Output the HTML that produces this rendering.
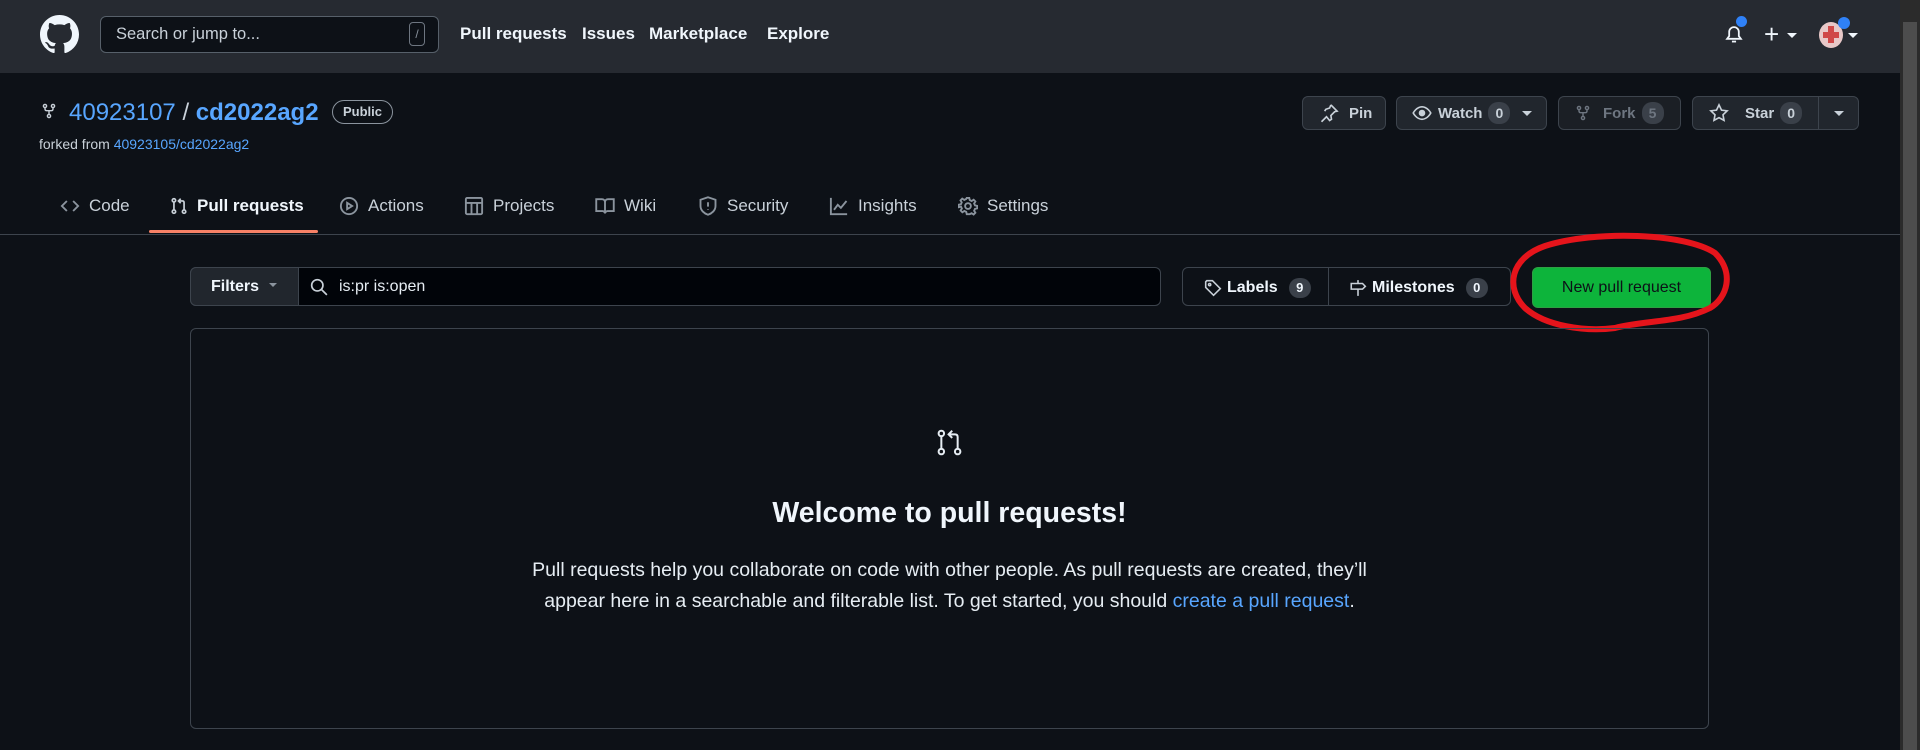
<!DOCTYPE html>
<html><head><meta charset="utf-8"><style>
*{box-sizing:border-box;margin:0;padding:0}
body{width:1920px;height:750px;overflow:hidden;background:#0d1117;font-family:"Liberation Sans",sans-serif;color:#c9d1d9;position:relative}
.a{position:absolute;white-space:nowrap}
.hdr{position:absolute;left:0;top:0;width:1900px;height:73px;background:#262a31}
.sb{position:absolute;right:0;top:0;width:20px;height:750px;background:#2b2b2b}
.sb i{position:absolute;left:3px;top:22px;width:14px;height:728px;background:#4d4d4d}
.nav{font-weight:bold;font-size:17px;color:#f0f6fc;top:24px}
.btn{position:absolute;border:1px solid #3d444d;border-radius:6px;background:#21262d;height:34px;top:96px;font-size:15px;font-weight:bold;color:#c9d1d9;display:flex;align-items:center}
.cnt{display:inline-block;background:#3a4049;border-radius:10px;min-width:22px;height:22px;line-height:22px;text-align:center;font-size:14px;margin-left:6px}
.tab{top:196px;font-size:17px;color:#c9d1d9;display:flex;align-items:center;gap:9px}
.tab svg{stroke:#8b949e;fill:none;stroke-width:1.5}
</style></head><body>
<div class="hdr"></div>
<div class="sb"><i></i></div>
<svg class="a" style="left:40px;top:15px" width="39" height="39" viewBox="0 0 16 16"><path fill="#f0f6fc" d="M8 0C3.58 0 0 3.58 0 8c0 3.540 2.29 6.530 5.470 7.590.4.07.55-.17.55-.38 0-.19-.01-.82-.01-1.49-2.010.37-2.530-.49-2.690-.94-.09-.23-.48-.94-.82-1.130-.28-.15-.68-.52-.01-.53.63-.01 1.080.58 1.230.82.72 1.210 1.870.87 2.330.66.07-.52.28-.87.51-1.070-1.780-.2-3.640-.89-3.640-3.950 0-.87.31-1.590.82-2.150-.08-.2-.36-1.020.08-2.120 0 0 .67-.21 2.200.82.64-.18 1.320-.27 2-.27.68 0 1.360.09 2 .27 1.530-1.040 2.200-.82 2.200-.82.44 1.100.16 1.920.08 2.120.51.56.82 1.270.82 2.150 0 3.070-1.870 3.750-3.650 3.950.29.25.54.73.54 1.480 0 1.070-.01 1.930-.01 2.200 0 .21.15.46.55.38A8.013 8.013 0 0016 8c0-4.420-3.580-8-8-8z"/></svg>
<div class="a" style="left:100px;top:16px;width:339px;height:37px;border:1px solid #57606a;border-radius:6px;background:#0d1117"></div>
<div class="a" style="left:116px;top:25px;font-size:16.5px;color:#c9d1d9">Search or jump to...</div>
<div class="a" style="left:409px;top:22px;width:16px;height:24px;border:1px solid #6e7681;border-radius:4px;font-size:12px;text-align:center;line-height:22px;color:#8b949e">/</div>
<div class="a nav" style="left:460px">Pull requests</div>
<div class="a nav" style="left:582px">Issues</div>
<div class="a nav" style="left:649px">Marketplace</div>
<div class="a nav" style="left:767px">Explore</div>
<svg class="a" style="left:1723px;top:22px" width="22" height="24" viewBox="0 0 16 16" fill="none" stroke="#f0f6fc" stroke-width="1.3"><path d="M3 11.5h10l-1.5-2V6.5a3.5 3.5 0 00-7 0v3z"/><path d="M6.5 13.5h3"/></svg>
<div class="a" style="left:1736px;top:16px;width:11px;height:11px;border-radius:50%;background:#2f81f7"></div>
<div class="a" style="left:1764px;top:19px;font-size:26px;color:#f0f6fc">+</div>
<div class="a" style="left:1787px;top:33px;border:5px solid transparent;border-top-color:#f0f6fc"></div>
<div class="a" style="left:1819px;top:22px;width:24px;height:26px;border-radius:50%;background:#e8c8c8"></div>
<div class="a" style="left:1823px;top:32px;width:16px;height:6px;background:#d04848"></div>
<div class="a" style="left:1828px;top:26px;width:6px;height:17px;background:#d04848"></div>
<div class="a" style="left:1838px;top:17px;width:12px;height:12px;border-radius:50%;background:#2f81f7"></div>
<div class="a" style="left:1848px;top:33px;border:5px solid transparent;border-top-color:#f0f6fc"></div>

<svg class="a" style="left:41px;top:102px" width="16" height="18" viewBox="0 0 16 16" fill="none" stroke="#c9d1d9" stroke-width="1.4"><circle cx="4" cy="3" r="1.6"/><circle cx="12" cy="3" r="1.6"/><circle cx="8" cy="13" r="1.6"/><path d="M4 4.6v1.4c0 1 .6 1.7 1.7 1.7h4.6c1 0 1.7-.7 1.7-1.7V4.6M8 7.7v3.7"/></svg>
<div class="a" style="left:69px;top:99px;font-size:24px;color:#58a6ff">40923107 <span style="color:#c9d1d9">/</span> <b>cd2022ag2</b></div>
<div class="a" style="left:332px;top:100px;width:61px;height:24px;border:1px solid #8b949e;border-radius:12px;font-size:13px;font-weight:bold;text-align:center;line-height:22px">Public</div>
<div class="a" style="left:39px;top:136px;font-size:14px">forked from <span style="color:#58a6ff">40923105/cd2022ag2</span></div>

<div class="btn" style="left:1302px;width:84px;padding-left:16px"><svg width="20" height="20" viewBox="0 0 16 16" fill="none" stroke="#c9d1d9" stroke-width="1.3"><path d="M9.5 1.5l5 5-2 .5-3 3 .5 3-1.5 1L6 11 2 15M4.5 6.5l1-1.5 3-1 1-2.5"/></svg><span style="margin-left:10px">Pin</span></div>
<div class="btn" style="left:1396px;width:151px;padding-left:15px"><svg width="20" height="20" viewBox="0 0 16 16" fill="none" stroke="#c9d1d9" stroke-width="1.3"><path d="M1 8s2.5-5 7-5 7 5 7 5-2.5 5-7 5-7-5-7-5z"/><circle cx="8" cy="8" r="2" fill="#c9d1d9"/></svg><span style="margin-left:6px">Watch</span><span class="cnt">0</span><span style="margin-left:12px;border:5px solid transparent;border-top-color:#c9d1d9;margin-top:5px"></span></div>
<div class="btn" style="left:1558px;width:123px;padding-left:16px;color:#6e7681;background:#1b1f25"><svg width="16" height="20" viewBox="0 0 16 16" fill="none" stroke="#6e7681" stroke-width="1.4"><circle cx="4" cy="3" r="1.6"/><circle cx="12" cy="3" r="1.6"/><circle cx="8" cy="13" r="1.6"/><path d="M4 4.6v1.4c0 1 .6 1.7 1.7 1.7h4.6c1 0 1.7-.7 1.7-1.7V4.6M8 7.7v3.7"/></svg><span style="margin-left:12px">Fork</span><span class="cnt" style="color:#6e7681">5</span></div>
<div class="btn" style="left:1692px;width:167px;padding-left:16px"><svg width="20" height="20" viewBox="0 0 16 16" fill="none" stroke="#c9d1d9" stroke-width="1.3"><path d="M8 1.5l2 4.2 4.5.6-3.3 3.1.8 4.5L8 11.7l-4 2.2.8-4.5L1.5 6.3l4.5-.6z"/></svg><span style="margin-left:16px">Star</span><span class="cnt">0</span><span style="position:absolute;left:125px;top:0;height:32px;border-left:1px solid #3d444d"></span><span style="position:absolute;left:141px;top:14px;border:5px solid transparent;border-top-color:#c9d1d9"></span></div>

<div class="a tab" style="left:60px"><svg width="20" height="20" viewBox="0 0 16 16"><path d="M5.5 4L1.5 8l4 4M10.5 4l4 4-4 4"/></svg>Code</div>
<div class="a tab" style="left:170px;font-weight:bold;color:#f0f6fc"><svg width="18" height="20" viewBox="0 0 16 16" style="stroke:#c9d1d9"><circle cx="3.5" cy="3" r="1.5"/><circle cx="3.5" cy="13" r="1.5"/><circle cx="12.5" cy="13" r="1.5"/><path d="M3.5 4.5v7M12.5 11.5V5c0-1-.5-1.5-1.5-1.5H8M9.5 1.5l-2 2 2 2"/></svg>Pull requests</div>
<div class="a tab" style="left:339px"><svg width="20" height="20" viewBox="0 0 16 16"><circle cx="8" cy="8" r="6.5"/><path d="M6.5 5.5v5l4-2.5z"/></svg>Actions</div>
<div class="a tab" style="left:464px"><svg width="20" height="20" viewBox="0 0 16 16"><rect x="1.5" y="1.5" width="13" height="13" rx="1"/><path d="M1.5 5.5h13M6 5.5v9M10.5 5.5v9"/></svg>Projects</div>
<div class="a tab" style="left:595px"><svg width="20" height="20" viewBox="0 0 16 16"><path d="M1 2.5h4.5c1.5 0 2.5 1 2.5 2.5v9c0-1-1-2-2-2H1zM15 2.5h-4.5C9 2.5 8 3.5 8 5v9c0-1 1-2 2-2h5z"/></svg>Wiki</div>
<div class="a tab" style="left:698px"><svg width="20" height="20" viewBox="0 0 16 16"><path d="M8 1l6 2v5c0 3.5-3 6-6 7-3-1-6-3.5-6-7V3z"/><path d="M8 5v3.5M8 10.5v.5"/></svg>Security</div>
<div class="a tab" style="left:829px"><svg width="20" height="20" viewBox="0 0 16 16"><path d="M1.5 1.5v13h13M4 11l3-4 2.5 2.5L14 4"/></svg>Insights</div>
<div class="a tab" style="left:958px"><svg width="20" height="20" viewBox="0 0 16 16"><circle cx="8" cy="8" r="2.3"/><path d="M7 1.5h2l.4 1.8 1.5.7 1.6-1 1.4 1.4-1 1.6.7 1.5 1.8.4v2l-1.8.4-.7 1.5 1 1.6-1.4 1.4-1.6-1-1.5.7L9 14.5H7l-.4-1.8-1.5-.7-1.6 1-1.4-1.4 1-1.6-.7-1.5L.5 9V7l1.8-.4.7-1.5-1-1.6 1.4-1.4 1.6 1 1.5-.7z"/></svg>Settings</div>
<div class="a" style="left:149px;top:230px;width:169px;height:3px;background:#f78166;border-radius:2px"></div>
<div class="a" style="left:0;top:234px;width:1900px;height:1px;background:#3d444d"></div>

<div class="a" style="left:190px;top:267px;width:971px;height:39px;border:1px solid #3d444d;border-radius:6px;background:#010409"></div>
<div class="a" style="left:190px;top:267px;width:109px;height:39px;border:1px solid #3d444d;border-radius:6px 0 0 6px;background:#21262d;font-size:16px;font-weight:bold;padding:10px 0 0 20px;color:#f0f6fc">Filters <span style="display:inline-block;border:4px solid transparent;border-top-color:#8b949e;margin-left:6px"></span></div>
<svg class="a" style="left:310px;top:278px" width="18" height="18" viewBox="0 0 16 16" fill="none" stroke="#c9d1d9" stroke-width="1.5"><circle cx="6.5" cy="6.5" r="5"/><path d="M10.2 10.2L15 15"/></svg>
<div class="a" style="left:339px;top:278px;font-size:16px;color:#e6edf3">is:pr is:open</div>
<div class="a" style="left:1182px;top:267px;width:329px;height:39px;border:1px solid #3d444d;border-radius:6px"></div>
<div class="a" style="left:1328px;top:267px;width:1px;height:39px;background:#3d444d"></div>
<div class="a" style="left:1204px;top:278px;font-size:16px;font-weight:bold;color:#f0f6fc;display:flex;align-items:center;gap:5px"><svg width="18" height="18" viewBox="0 0 16 16" fill="none" stroke="#c9d1d9" stroke-width="1.4"><path d="M1.5 2.5v5l7 7 6-6-7-7h-5z"/><circle cx="5" cy="5" r="1"/></svg>Labels<span class="cnt" style="height:20px;line-height:20px;font-size:13px">9</span></div>
<div class="a" style="left:1349px;top:278px;font-size:16px;font-weight:bold;color:#f0f6fc;display:flex;align-items:center;gap:5px"><svg width="18" height="18" viewBox="0 0 16 16" fill="none" stroke="#c9d1d9" stroke-width="1.4"><path d="M8 1v3M8 9v6M2 4h10l2.5 2.5L12 9H2z"/></svg>Milestones<span class="cnt" style="height:20px;line-height:20px;font-size:13px">0</span></div>
<div class="a" style="left:1532px;top:267px;width:179px;height:41px;border-radius:6px;background:#0db43b;border:1px solid #2ea043;font-size:16px;color:#0d1117;text-align:center;line-height:39px">New pull request</div>
<svg class="a" style="left:1505px;top:228px" width="235" height="110" viewBox="0 0 235 110"><path d="M40 18 C90 2 180 5 210 25 C230 45 222 70 205 80 C175 95 140 92 110 100 C80 104 40 98 20 80 C0 60 5 30 40 18 Z" fill="none" stroke="#e5141b" stroke-width="6"/></svg>

<div class="a" style="left:190px;top:328px;width:1519px;height:401px;border:1px solid #3d444d;border-radius:6px"></div>
<svg class="a" style="left:935px;top:428px" width="29" height="29" viewBox="0 0 16 16" fill="none" stroke="#e6edf3" stroke-width="1.1"><circle cx="3.5" cy="3" r="1.5"/><circle cx="3.5" cy="13" r="1.5"/><circle cx="12.5" cy="13" r="1.5"/><path d="M3.5 4.5v7M12.5 11.5V5c0-1-.5-1.5-1.5-1.5H8M9.5 1.5l-2 2 2 2"/></svg>
<div class="a" style="left:190px;width:1519px;top:497px;text-align:center;font-size:28.5px;font-weight:bold;color:#f0f6fc">Welcome to pull requests!</div>
<div class="a" style="left:190px;width:1519px;top:555px;text-align:center;font-size:19.5px;line-height:31px;color:#e6edf3">Pull requests help you collaborate on code with other people. As pull requests are created, they’ll<br>appear here in a searchable and filterable list. To get started, you should <span style="color:#58a6ff">create a pull request</span>.</div>
</body></html>
